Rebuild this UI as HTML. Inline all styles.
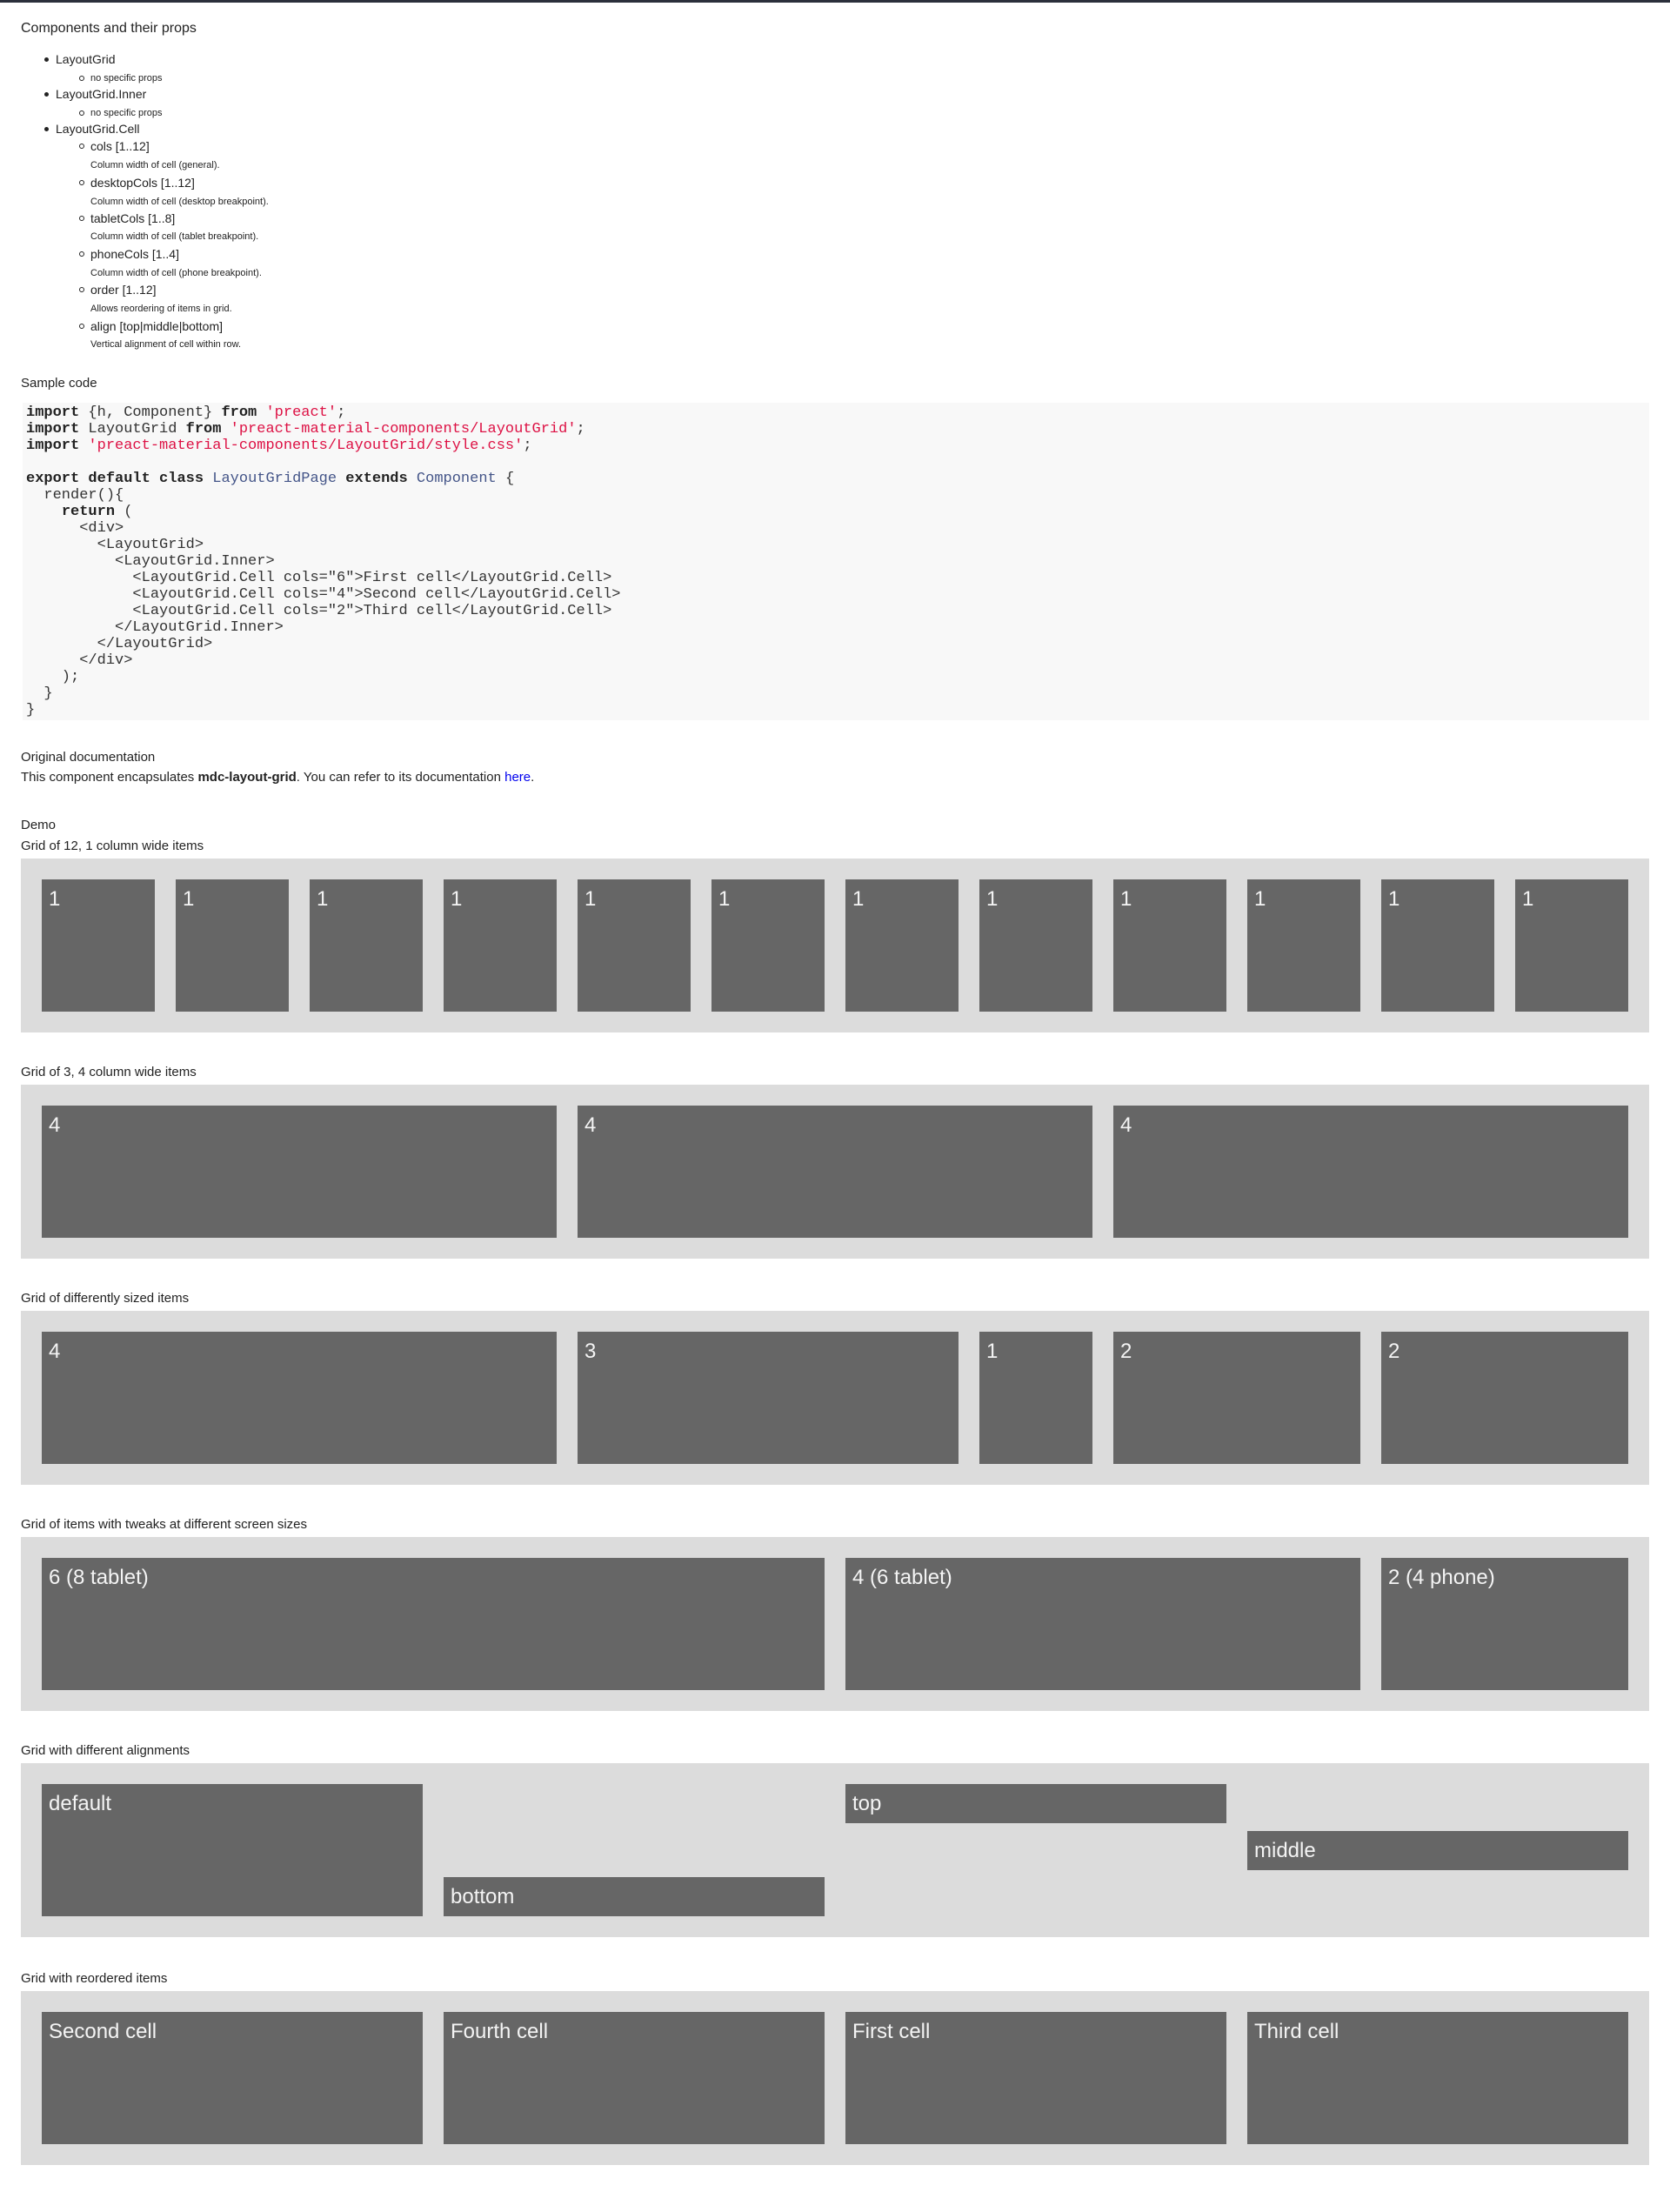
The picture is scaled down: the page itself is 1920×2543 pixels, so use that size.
<!DOCTYPE html>
<html><head><meta charset="utf-8"><style>
*{margin:0;padding:0;box-sizing:border-box}
body{width:1920px;height:2543px;position:relative;background:#fff;font-family:"Liberation Sans",Arial,sans-serif;color:#222;overflow:hidden}
.bar{position:absolute;left:0;top:0;width:1920px;height:3px;background:#2b303b}
.t{position:absolute;white-space:nowrap}
.h{font-size:16px;line-height:20px;left:24px}
.li{font-size:14px;line-height:18px;left:64px}
.sub{font-size:11px;line-height:14px;left:104px}
.pn{font-size:14px;line-height:18px;left:104px}
.dot{position:absolute;left:51px;width:5px;height:5px;border-radius:50%;background:#222}
.cir{position:absolute;left:91px;width:6px;height:6px;border-radius:50%;border:1px solid #222}
pre{position:absolute;left:26px;top:463px;width:1870px;height:365px;background:#f8f8f8;padding:2px 4px;font-family:"Liberation Mono",monospace;font-size:17px;line-height:19px;color:#333}
.k{font-weight:bold;color:#222}.s{color:#dd1144}.c{color:#445588}
.box{position:absolute;left:24px;width:1872px;height:200px;background:#dcdcdc;padding:24px;display:flex;gap:24px;align-items:flex-start}
.cell{background:#666;color:#f4f4f4;height:152px;padding:8px;font-size:24px;line-height:29px;flex:none}
.w1{width:130px}.w2{width:284px}.w3{width:438px}.w4{width:592px}.w6{width:900px}
.sm{height:45px}
</style></head><body>
<div class="bar"></div>
<div class="t h" style="top:23px">Components and their props</div>

<div class="dot" style="top:66px"></div><div class="t li" style="top:59px">LayoutGrid</div>
<div class="cir" style="top:87px"></div><div class="t sub" style="top:83px">no specific props</div>
<div class="dot" style="top:106px"></div><div class="t li" style="top:99px">LayoutGrid.Inner</div>
<div class="cir" style="top:127px"></div><div class="t sub" style="top:123px">no specific props</div>
<div class="dot" style="top:146px"></div><div class="t li" style="top:139px">LayoutGrid.Cell</div>

<div class="cir" style="top:165px"></div><div class="t pn" style="top:159px">cols [1..12]</div>
<div class="t sub" style="top:183px">Column width of cell (general).</div>
<div class="cir" style="top:207px"></div><div class="t pn" style="top:201px">desktopCols [1..12]</div>
<div class="t sub" style="top:225px">Column width of cell (desktop breakpoint).</div>
<div class="cir" style="top:248px"></div><div class="t pn" style="top:242px">tabletCols [1..8]</div>
<div class="t sub" style="top:265px">Column width of cell (tablet breakpoint).</div>
<div class="cir" style="top:289px"></div><div class="t pn" style="top:283px">phoneCols [1..4]</div>
<div class="t sub" style="top:307px">Column width of cell (phone breakpoint).</div>
<div class="cir" style="top:330px"></div><div class="t pn" style="top:324px">order [1..12]</div>
<div class="t sub" style="top:348px">Allows reordering of items in grid.</div>
<div class="cir" style="top:372px"></div><div class="t pn" style="top:366px">align [top|middle|bottom]</div>
<div class="t sub" style="top:389px">Vertical alignment of cell within row.</div>

<div class="t h" style="top:431px;font-size:15px">Sample code</div>
<pre><span class="k">import</span> {h, Component} <span class="k">from</span> <span class="s">'preact'</span>;
<span class="k">import</span> LayoutGrid <span class="k">from</span> <span class="s">'preact-material-components/LayoutGrid'</span>;
<span class="k">import</span> <span class="s">'preact-material-components/LayoutGrid/style.css'</span>;

<span class="k">export</span> <span class="k">default</span> <span class="k">class</span> <span class="c">LayoutGridPage</span> <span class="k">extends</span> <span class="c">Component</span> {
  render(){
    <span class="k">return</span> (
      &lt;div&gt;
        &lt;LayoutGrid&gt;
          &lt;LayoutGrid.Inner&gt;
            &lt;LayoutGrid.Cell cols="6"&gt;First cell&lt;/LayoutGrid.Cell&gt;
            &lt;LayoutGrid.Cell cols="4"&gt;Second cell&lt;/LayoutGrid.Cell&gt;
            &lt;LayoutGrid.Cell cols="2"&gt;Third cell&lt;/LayoutGrid.Cell&gt;
          &lt;/LayoutGrid.Inner&gt;
        &lt;/LayoutGrid&gt;
      &lt;/div&gt;
    );
  }
}</pre>

<div class="t h" style="top:861px;font-size:15px">Original documentation</div>
<div class="t h" style="top:884px;font-size:15px">This component encapsulates <b>mdc-layout-grid</b>. You can refer to its documentation <span style="color:#0000ee">here</span>.</div>
<div class="t h" style="top:939px;font-size:15px">Demo</div>

<div class="t h" style="top:963px;font-size:15px">Grid of 12, 1 column wide items</div>
<div class="box" style="top:987px">
<div class="cell w1">1</div><div class="cell w1">1</div><div class="cell w1">1</div><div class="cell w1">1</div><div class="cell w1">1</div><div class="cell w1">1</div><div class="cell w1">1</div><div class="cell w1">1</div><div class="cell w1">1</div><div class="cell w1">1</div><div class="cell w1">1</div><div class="cell w1">1</div>
</div>

<div class="t h" style="top:1223px;font-size:15px">Grid of 3, 4 column wide items</div>
<div class="box" style="top:1247px">
<div class="cell w4">4</div><div class="cell w4">4</div><div class="cell w4">4</div>
</div>

<div class="t h" style="top:1483px;font-size:15px">Grid of differently sized items</div>
<div class="box" style="top:1507px">
<div class="cell w4">4</div><div class="cell w3">3</div><div class="cell w1">1</div><div class="cell w2">2</div><div class="cell w2">2</div>
</div>

<div class="t h" style="top:1743px;font-size:15px">Grid of items with tweaks at different screen sizes</div>
<div class="box" style="top:1767px">
<div class="cell w6">6 (8 tablet)</div><div class="cell w4">4 (6 tablet)</div><div class="cell w2">2 (4 phone)</div>
</div>

<div class="t h" style="top:2003px;font-size:15px">Grid with different alignments</div>
<div class="box" style="top:2027px">
<div class="cell w3">default</div>
<div class="cell w3 sm" style="align-self:flex-end">bottom</div>
<div class="cell w3 sm">top</div>
<div class="cell w3 sm" style="align-self:center">middle</div>
</div>

<div class="t h" style="top:2265px;font-size:15px">Grid with reordered items</div>
<div class="box" style="top:2289px">
<div class="cell w3">Second cell</div><div class="cell w3">Fourth cell</div><div class="cell w3">First cell</div><div class="cell w3">Third cell</div>
</div>
</body></html>
